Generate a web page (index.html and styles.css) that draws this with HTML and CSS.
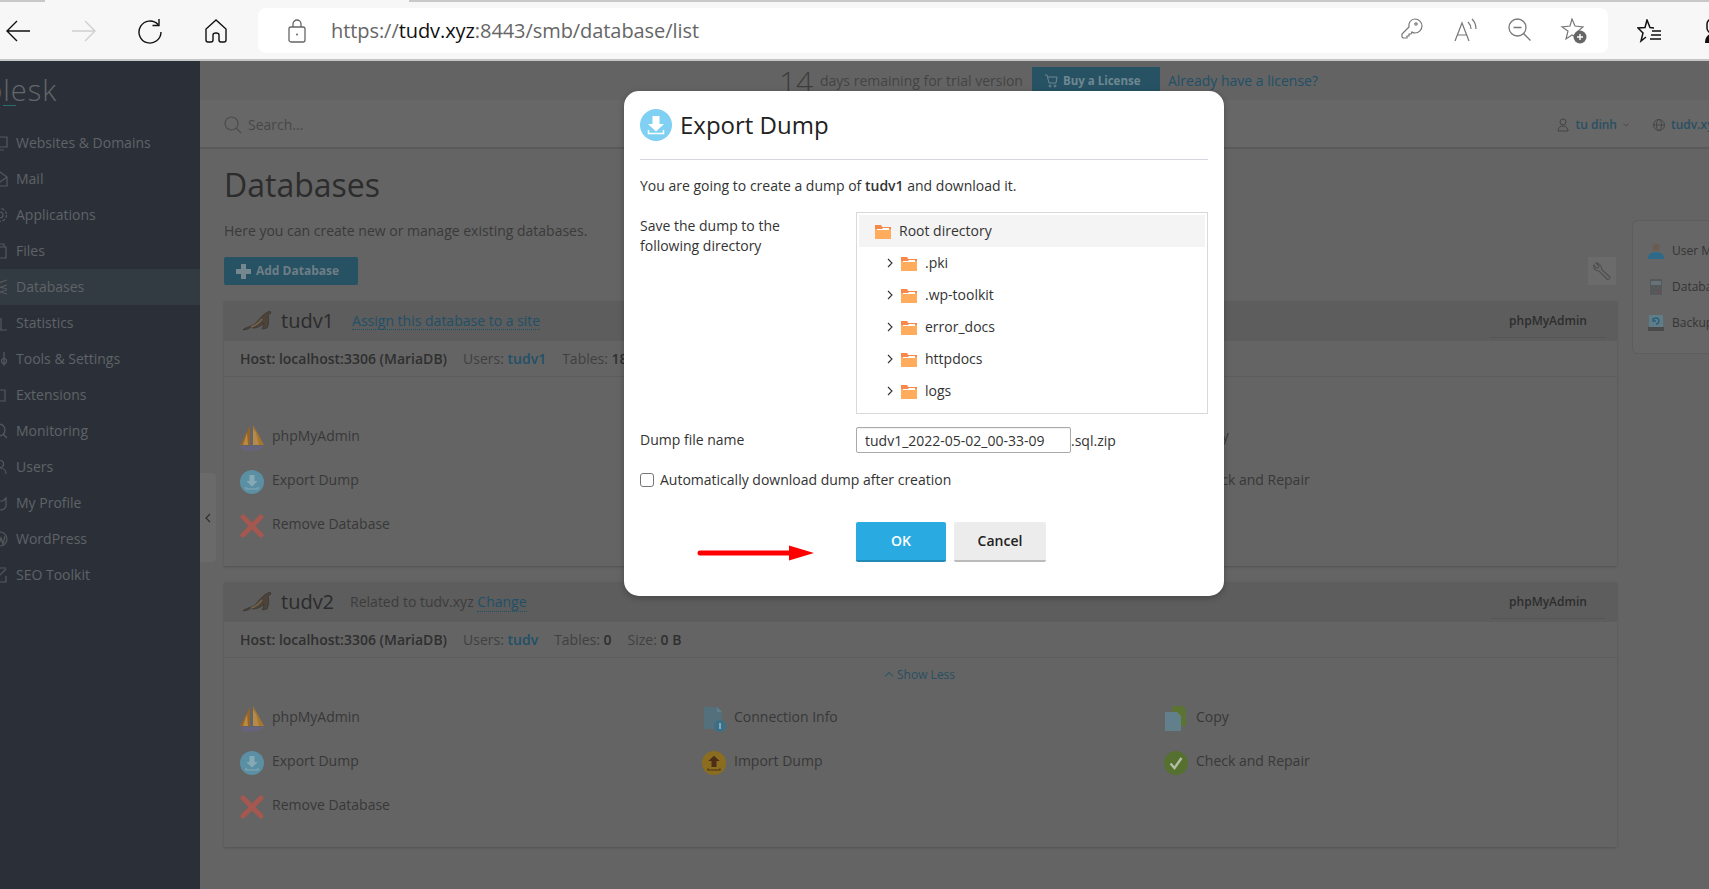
FILE: index.html
```html
<!DOCTYPE html>
<html lang="en">
  <head>
    <meta charset="UTF-8" />
    <title>Databases - Plesk</title>
    <link rel="stylesheet" href="styles.css">
  </head>
  <body>
    <svg class="sprite" xmlns="http://www.w3.org/2000/svg">
      <symbol id="i-sail" viewBox="0 0 24 26">
        <path d="M10 1 L10 20 L0 20 Z" fill="#96652b"/>
        <path d="M13 0 L13 20 L24 20 Z" fill="#a8762f"/>
        <path d="M16 8 L19 20 L13 20 L13 4 Z" fill="#c09a62" opacity=".55"/>
        <path d="M7 8 L8 20 L3 20 Z" fill="#b98a45"/>
        <path d="M0 21 L24 21 L20 25 L3 26 Z" fill="#67637a"/>
      </symbol>
      <symbol id="i-export" viewBox="0 0 24 24">
        <circle cx="12" cy="12" r="12" fill="#5b8fa3"/>
        <path d="M9.5 5h5v6h3.2L12 16.5 6.3 11h3.2z" fill="#86a9b6"/>
        <path d="M6 17v2h12v-2" fill="none" stroke="#86a9b6" stroke-width="1.2"/>
      </symbol>
      <symbol id="i-remove" viewBox="0 0 24 24">
        <path d="M3 3 L21 21 M21 3 L3 21" stroke="#a4584f" stroke-width="5" stroke-linecap="round"/>
      </symbol>
      <symbol id="i-info" viewBox="0 0 24 26">
        <path d="M2 1h13l5 5v17H2z" fill="#53707c"/>
        <path d="M15 1v5h5" fill="#5f7f8c"/>
        <circle cx="18" cy="20" r="6" fill="#3b6f88"/>
        <path d="M18 17v6" stroke="#9fb5be" stroke-width="1.6"/>
      </symbol>
      <symbol id="i-import" viewBox="0 0 24 24">
        <circle cx="12" cy="12" r="12" fill="#8a6d1f"/>
        <path d="M9.5 16h5v-6h3.2L12 4.8 6.3 10h3.2z" fill="#4d2c18"/>
        <path d="M6 17.5v1.5h12v-1.5" fill="none" stroke="#4d2c18" stroke-width="1.2"/>
      </symbol>
      <symbol id="i-copy" viewBox="0 0 24 26">
        <path d="M8 0h11l3 3v17H8z" fill="#5b7434"/>
        <path d="M1 6h12l4 4v15H1z" fill="#62808c"/>
      </symbol>
      <symbol id="i-check" viewBox="0 0 24 24">
        <circle cx="12" cy="12" r="12" fill="#56702f"/>
        <path d="M6.5 12.5l4 4.5 7-10" fill="none" stroke="#b4bda6" stroke-width="2.4"/>
      </symbol>
      <symbol id="i-seal" viewBox="0 0 30 20">
        <path d="M1 19c2-3 8-3 12-6 3-3 6-8 11-11l4-2 1 2-3 2c1 4 1 9-1 13l-5 1 1-2 1-4c-3 3-7 5-11 5l-2-1-3 2z" fill="#4e4338" stroke="#3a3734" stroke-width=".8"/>
        <path d="M9 16c4-1 8-4 11-8" fill="none" stroke="#73634f" stroke-width="1.6"/>
      </symbol>
      <symbol id="i-folder" viewBox="0 0 16 15">
        <path d="M0 1h6l1 2h9v12H0z" fill="#ffad5c"/>
        <path d="M0 1h6l1 2h9v2H0z" fill="#f5894a"/>
        <path d="M2 5h5l1-1h6v2H2z" fill="#fff"/>
      </symbol>
      <symbol id="i-chev" viewBox="0 0 8 12">
        <path d="M3 2 L7 6 L3 10" fill="none" stroke="#333" stroke-width="1.1"/>
      </symbol>
    </svg>

    <div class="tabstrip"></div>
    <div class="toolbar">
      <span class="slot slot-first">
        <svg width="26" height="24" viewBox="0 0 26 24" fill="none" stroke="#111" stroke-width="1.4"><path d="M25 12H2M12 2 2 12l10 10"/></svg>
      </span>
      <span class="slot">
        <svg width="26" height="24" viewBox="0 0 26 24" fill="none" stroke="#cfcfcf" stroke-width="1.4"><path d="M1 12h23M14 2l10 10-10 10"/></svg>
      </span>
      <span class="slot">
        <svg width="26" height="26" viewBox="0 0 26 26" fill="none" stroke="#111" stroke-width="1.4"><path d="M21 6.500A11 11 0 1 0 24 14M22 1v6.500h-6.500"/></svg>
      </span>
      <span class="slot">
        <svg width="24" height="24" viewBox="0 0 24 24" fill="none" stroke="#111" stroke-width="1.4"><path d="M12 1 2 10v11q0 2 2 2h3q2 0 2-2v-5q0-2 3-2t3 2v5q0 2 2 2h3q2 0 2-2V10z"/></svg>
      </span>
      <div class="addressbar">
        <svg class="lock" width="20" height="24" viewBox="0 0 20 24" fill="none" stroke="#666" stroke-width="1.3"><rect x="2" y="8" width="16" height="15" rx="2"/><path d="M6 8V5a4 4 0 0 1 8 0v3"/><circle cx="10" cy="15.5" r="1" fill="#666" stroke="none"/></svg>
        <span class="url">https://<b>tudv.xyz</b>:8443/smb/database/list</span>
        <span class="bar-icons">
          <span class="bar-slot">
            <svg width="22" height="22" viewBox="0 0 22 22" fill="none" stroke="#777" stroke-width="1.2"><path d="M14 1a7 7 0 0 1 0 14c-1 0-2 0-3-1l-1 2H8v2H6v2H2l-1-1v-3l7-7c-1-4 2-8 6-8z"/><circle cx="15" cy="6" r="1.2"/></svg>
          </span>
          <span class="bar-slot">
            <svg width="24" height="24" viewBox="0 0 24 24" fill="none" stroke="#777" stroke-width="1.2"><path d="M1 23 8 5l7 18M3.5 17h9M14 4q3 3 3 7M18 1q4 4 4 10"/></svg>
          </span>
          <span class="bar-slot">
            <svg width="24" height="24" viewBox="0 0 24 24" fill="none" stroke="#777" stroke-width="1.3"><circle cx="9.5" cy="9.5" r="8.5"/><path d="M5.5 9.5h8M15.5 15.5l7 7"/></svg>
          </span>
          <span class="bar-slot">
            <svg width="28" height="26" viewBox="0 0 28 26" fill="none" stroke="#777" stroke-width="1.2"><path d="M12 1l3 7 8 1-6 5 2 7-7-4-6 4 2-8-6-4 8-1z"/><circle cx="20" cy="19" r="6.5" fill="#666" stroke="none"/><path d="M17 19h6M20 16v6" stroke="#fff" stroke-width="1.4"/></svg>
          </span>
        </span>
      </div>
      <span class="slot slot-gap">
        <svg width="26" height="24" viewBox="0 0 26 24" fill="none" stroke="#111" stroke-width="1.5"><path d="M9 18l-5 4 2-8-5-5 7-.5L10 1l3 7.500 4 .5M15 12h9M14 16h10M13 20h11"/></svg>
      </span>
      <span class="slot">
        <svg width="26" height="26" viewBox="0 0 26 26"><rect x="4" y="1" width="12" height="14" rx="5" fill="none" stroke="#111" stroke-width="1.5"/><path d="M2 25c0-7 4-10 11-10s11 3 11 10z" fill="#111"/></svg>
      </span>
    </div>

    <div class="app">
      <aside class="sidebar">
        <div class="logo">plesk</div>
        <nav class="nav">
          <a class="nav-item"><svg viewBox="0 0 16 16"><path d="M1 2h14v10H1zM4 15h8"/></svg>Websites &amp; Domains</a>
          <a class="nav-item"><svg viewBox="0 0 16 16"><path d="M1 6l7-5 7 5v9H1zM1 6l7 5 7-5"/></svg>Mail</a>
          <a class="nav-item"><svg viewBox="0 0 16 16"><circle cx="8" cy="8" r="3"/><circle cx="8" cy="8" r="6.5" stroke-dasharray="3 1.5"/></svg>Applications</a>
          <a class="nav-item"><svg viewBox="0 0 16 16"><path d="M2 4h12v11H2zM4 1h8v3"/></svg>Files</a>
          <a class="nav-item active"><svg viewBox="0 0 16 16"><path d="M15 1 1 6l14 4M15 6 1 11l14 4M15 11 1 15"/></svg>Databases</a>
          <a class="nav-item"><svg viewBox="0 0 16 16"><path d="M4 15V9M9 15V3M15 15H1"/></svg>Statistics</a>
          <a class="nav-item"><svg viewBox="0 0 16 16"><path d="M4 1v14M12 1v14"/><circle cx="4" cy="5" r="2.5"/><circle cx="12" cy="10" r="2.5"/></svg>Tools &amp; Settings</a>
          <a class="nav-item"><svg viewBox="0 0 16 16"><path d="M3 3h10v11H3z"/></svg>Extensions</a>
          <a class="nav-item"><svg viewBox="0 0 16 16"><circle cx="7" cy="7" r="6"/><path d="M11 11l4 4"/></svg>Monitoring</a>
          <a class="nav-item"><svg viewBox="0 0 16 16"><circle cx="8" cy="5" r="3.5"/><path d="M2 15c0-4 3-6 6-6s6 2 6 6"/></svg>Users</a>
          <a class="nav-item"><svg viewBox="0 0 16 16"><path d="M2 3l3 3h6l3-3v8a6 4 0 0 1-12 0z"/></svg>My Profile</a>
          <a class="nav-item"><svg viewBox="0 0 16 16"><circle cx="8" cy="8" r="7"/><path d="M4 5l3 8 2-6 2 6 2-8"/></svg>WordPress</a>
          <a class="nav-item"><svg viewBox="0 0 16 16"><path d="M2 1h12M2 1v14h12V9M6 10l8-8"/></svg>SEO Toolkit</a>
        </nav>
      </aside>

      <main class="main">
        <div class="collapse-handle">
          <svg width="6" height="10" viewBox="0 0 6 10" fill="none" stroke="#2d2d2d" stroke-width="1.1"><path d="M5 1 1 5l4 4"/></svg>
        </div>

        <div class="trial-banner">
          <span class="trial-days">14</span>
          <span class="trial-text">days remaining for trial version</span>
          <a class="buy-btn">
            <svg width="14" height="14" viewBox="0 0 14 14" fill="none" stroke="#6f8791" stroke-width="1"><path d="M1 1h2l2 8h7l1-6H4"/><circle cx="6" cy="12" r="1"/><circle cx="11" cy="12" r="1"/></svg>
            Buy a License
          </a>
          <a class="trial-link">Already have a license?</a>
        </div>

        <div class="searchbar">
          <svg class="search-icon" width="18" height="18" viewBox="0 0 18 18" fill="none" stroke="#4a4a4a" stroke-width="1.1"><circle cx="7.5" cy="7.5" r="6.5"/><path d="M12 12l5 5"/></svg>
          <span class="search-hint">Search...</span>
          <span class="user-menu">
            <svg width="12" height="14" viewBox="0 0 12 14" fill="none" stroke="#444" stroke-width="1"><circle cx="6" cy="4" r="3"/><path d="M1 13c0-3 2-5 5-5s5 2 5 5z"/></svg>
            <a>tu dinh</a>
            <svg width="6" height="4" viewBox="0 0 6 4" fill="none" stroke="#444" stroke-width=".8"><path d="M.5 .5 3 3 5.500 .5"/></svg>
          </span>
          <span class="domain-menu">
            <svg width="12" height="14" viewBox="0 0 12 12" fill="none" stroke="#444" stroke-width=".9"><circle cx="6" cy="6" r="5.500"/><ellipse cx="6" cy="6" rx="2.500" ry="5.500"/><path d="M.5 6h11"/></svg>
            <a>tudv.xyz</a>
          </span>
        </div>

        <div class="content">
          <div class="content-main">
            <h1 class="page-title">Databases</h1>
            <p class="page-desc">Here you can create new or manage existing databases.</p>
            <div class="page-tools">
              <a class="add-btn">
                <svg width="15" height="15" viewBox="0 0 15 15"><path d="M5 0h5v5h5v5h-5v5H5v-5H0V5h5z" fill="#76888f"/></svg>
                Add Database
              </a>
              <a class="tool-btn">
                <svg width="18" height="18" viewBox="0 0 18 18" fill="none" stroke="#4e4e4e" stroke-width="1.1"><path d="M3 1l3 3-1 2-2 0-2-3c-1 3 1 6 5 6l8 8c1 1 3 0 3-2l-8-7c0-4-3-7-6-7z"/></svg>
              </a>
            </div>

            <section class="db-card">
              <div class="db-head">
                <svg class="seal"><use href="#i-seal"/></svg>
                <span class="db-name">tudv1</span>
                <a class="dotted">Assign this database to a site</a>
                <a class="db-tab">phpMyAdmin</a>
              </div>
              <div class="db-info">
                <span class="strong">Host: localhost:3306 (MariaDB)</span>
                <span>Users: <a class="link">tudv1</a></span>
                <span>Tables: <span class="strong">18</span></span>
              </div>
              <div class="show-less"><span class="caret"></span> Show Less</div>
              <div class="actions">
                <a class="action"><svg><use href="#i-sail"/></svg>phpMyAdmin</a>
                <a class="action"><svg><use href="#i-info"/></svg>Connection Info</a>
                <a class="action"><svg><use href="#i-copy"/></svg>Copy</a>
                <a class="action"><svg><use href="#i-export"/></svg>Export Dump</a>
                <a class="action"><svg><use href="#i-import"/></svg>Import Dump</a>
                <a class="action"><svg><use href="#i-check"/></svg>Check and Repair</a>
                <a class="action"><svg><use href="#i-remove"/></svg>Remove Database</a>
              </div>
            </section>

            <section class="db-card">
              <div class="db-head">
                <svg class="seal"><use href="#i-seal"/></svg>
                <span class="db-name">tudv2</span>
                <span class="related">Related to tudv.xyz <a class="dotted">Change</a></span>
                <a class="db-tab">phpMyAdmin</a>
              </div>
              <div class="db-info">
                <span class="strong">Host: localhost:3306 (MariaDB)</span>
                <span>Users: <a class="link">tudv</a></span>
                <span>Tables: <span class="strong">0</span></span>
                <span>Size: <span class="strong">0 B</span></span>
              </div>
              <div class="show-less"><span class="caret"></span> Show Less</div>
              <div class="actions">
                <a class="action"><svg><use href="#i-sail"/></svg>phpMyAdmin</a>
                <a class="action"><svg><use href="#i-info"/></svg>Connection Info</a>
                <a class="action"><svg><use href="#i-copy"/></svg>Copy</a>
                <a class="action"><svg><use href="#i-export"/></svg>Export Dump</a>
                <a class="action"><svg><use href="#i-import"/></svg>Import Dump</a>
                <a class="action"><svg><use href="#i-check"/></svg>Check and Repair</a>
                <a class="action"><svg><use href="#i-remove"/></svg>Remove Database</a>
              </div>
            </section>
          </div>

          <aside class="side-panel">
            <a class="side-item">
              <svg viewBox="0 0 16 16"><circle cx="8" cy="4.500" r="3.500" fill="#6b5c50"/><path d="M0 16c0-5 3-7 8-7s8 2 8 7z" fill="#2d6a8a"/></svg>
              User Management
            </a>
            <a class="side-item">
              <svg viewBox="0 0 16 16"><rect x="2" y="0" width="12" height="16" fill="#55595c"/><path d="M3 3h10M3 5h10" stroke="#7a8a94"/><rect x="10" y="12" width="2" height="1" fill="#a33"/></svg>
              Databases
            </a>
            <a class="side-item">
              <svg viewBox="0 0 16 16"><rect x="1" y="0" width="14" height="12" fill="#5f7d88"/><rect x="0" y="12" width="16" height="4" fill="#4a4a4a"/><path d="M5 6a3 3 0 1 1 3 3M5 3v3h3" fill="none" stroke="#2b5f7a" stroke-width="1.300"/></svg>
              Backup
            </a>
          </aside>
        </div>
      </main>
    </div>

    <div class="modal">
      <div class="modal-head">
        <svg class="modal-icon" viewBox="0 0 32 32">
          <circle cx="16" cy="16" r="16" fill="#7fd0f2"/>
          <path d="M12.500 7h7v8h4.500L16 22.500 8 15h4.500z" fill="#fff"/>
          <path d="M8.500 21v3.500h15V21" fill="none" stroke="#fff" stroke-width="1.500"/>
        </svg>
        <h2 class="modal-title">Export Dump</h2>
      </div>
      <p class="modal-intro">You are going to create a dump of <b>tudv1</b> and download it.</p>

      <div class="form-row">
        <label class="form-label tree-label">Save the dump to the following directory</label>
        <div class="tree">
          <div class="tree-row root"><svg class="folder"><use href="#i-folder"/></svg>Root directory</div>
          <div class="tree-row"><svg class="chev"><use href="#i-chev"/></svg><svg class="folder"><use href="#i-folder"/></svg>.pki</div>
          <div class="tree-row"><svg class="chev"><use href="#i-chev"/></svg><svg class="folder"><use href="#i-folder"/></svg>.wp-toolkit</div>
          <div class="tree-row"><svg class="chev"><use href="#i-chev"/></svg><svg class="folder"><use href="#i-folder"/></svg>error_docs</div>
          <div class="tree-row"><svg class="chev"><use href="#i-chev"/></svg><svg class="folder"><use href="#i-folder"/></svg>httpdocs</div>
          <div class="tree-row"><svg class="chev"><use href="#i-chev"/></svg><svg class="folder"><use href="#i-folder"/></svg>logs</div>
        </div>
      </div>

      <div class="form-row file-row">
        <label class="form-label">Dump file name</label>
        <input class="file-input" type="text" value="tudv1_2022-05-02_00-33-09" />
        <span class="file-ext">.sql.zip</span>
      </div>

      <label class="check-row"><input class="check" type="checkbox" />Automatically download dump after creation</label>

      <div class="modal-buttons">
        <button class="btn btn-ok">OK</button>
        <button class="btn btn-cancel">Cancel</button>
      </div>

      <svg class="red-arrow" width="118" height="18" viewBox="0 0 118 18">
        <path d="M3 9h92" stroke="#ff0000" stroke-width="5" stroke-linecap="round"/>
        <path d="M92 1.500 117 9 92 16.500z" fill="#ff0000"/>
      </svg>
    </div>
  </body>
</html>
```

FILE: styles.css
```css
* {
  box-sizing: border-box;
}

html, body {
  height: 100%;
}

body {
  margin: 0;
  overflow: hidden;
  display: flex;
  flex-direction: column;
  font-family: "Open Sans", Arial, sans-serif;
  font-size: 14px;
  line-height: 20px;
  color: #333;
  background: #646464;
}

.sprite {
  position: absolute;
  width: 0;
  height: 0;
}

/* browser chrome */
.tabstrip {
  height: 2px;
  flex: none;
  background: linear-gradient(to right, #c8c8c8 45px, #f7f7f7 45px, #f7f7f7 409px, #c8c8c8 409px);
}

.toolbar {
  height: 59px;
  flex: none;
  display: flex;
  align-items: flex-start;
  padding-top: 6px;
  background: #f7f7f7;
  border-bottom: 2px solid #c6c6c6;
  overflow: hidden;
}

.slot {
  flex: none;
  width: 66px;
  height: 45px;
  display: flex;
  align-items: center;
  justify-content: center;
}

.slot-first {
  margin-left: -15px;
}

.slot-gap {
  margin-left: 9px;
}

.addressbar {
  flex: none;
  width: 1350px;
  height: 45px;
  margin-left: 9px;
  display: flex;
  align-items: center;
  background: #fff;
  border-radius: 8px;
}

.lock {
  margin-left: 29px;
}

.url {
  margin-left: 24px;
  font-size: 20px;
  letter-spacing: -0.07px;
  color: #666;
}

.url b {
  font-weight: 400;
  color: #111;
}

.bar-icons {
  margin-left: auto;
  padding-right: 7px;
  display: flex;
}

.bar-slot {
  width: 54px;
  display: flex;
  justify-content: center;
}

/* plesk shell */
.app {
  flex: 1;
  min-height: 0;
  display: flex;
}

.sidebar {
  flex: none;
  width: 200px;
  background: #2b3038;
  color: #5f6367;
}

.logo {
  position: relative;
  height: 64px;
  margin-left: -15px;
  padding-top: 9px;
  font-size: 29px;
  font-weight: 300;
  line-height: 40px;
  letter-spacing: 1px;
  color: #63676b;
}

.logo::after {
  content: "";
  position: absolute;
  left: 18px;
  top: 44px;
  width: 13px;
  height: 1px;
  background: #2c6b70;
}

.nav-item {
  height: 36px;
  display: flex;
  align-items: center;
  gap: 8px;
  font-weight: 500;
}

.nav-item svg {
  width: 16px;
  height: 16px;
  margin-left: -8px;
  fill: none;
  stroke: #55595e;
  stroke-width: 1.2;
}

.nav-item.active {
  background: #333b42;
}

.main {
  position: relative;
  flex: 1;
  min-width: 0;
  overflow: hidden;
  background: #646464;
}

.collapse-handle {
  position: absolute;
  left: 0;
  top: 412px;
  width: 16px;
  height: 89px;
  display: flex;
  align-items: center;
  justify-content: center;
  background: #6a6a6a;
  border-radius: 0 4px 4px 0;
}

.trial-banner {
  height: 39px;
  padding-left: 579px;
  display: flex;
  align-items: flex-end;
  background: #636363;
}

.trial-days {
  width: 41px;
  font-size: 30px;
  font-weight: 300;
  line-height: 36px;
  color: #3d3d3d;
}

.trial-text {
  height: 33px;
  line-height: 28px;
  color: #434343;
}

.buy-btn {
  height: 33px;
  margin-left: 9px;
  width: 128px;
  padding: 0 0 5px 12px;
  display: flex;
  align-items: center;
  gap: 5px;
  font-size: 11.5px;
  font-weight: 700;
  color: #6f8791;
  background: #265264;
}

.trial-link {
  height: 33px;
  margin-left: 8px;
  line-height: 28px;
  color: #1f5068;
}

.searchbar {
  height: 49px;
  padding: 2px 0 0 24px;
  display: flex;
  align-items: center;
  background: #676767;
  border-bottom: 2px solid #5a5a5a;
  font-size: 12px;
}

.search-icon {
  flex: none;
}

.search-hint {
  margin-left: 6px;
  font-size: 14px;
  color: #474747;
}

.user-menu {
  margin-left: auto;
  display: flex;
  align-items: center;
  gap: 6px;
  font-weight: 600;
  color: #294f61;
}

.domain-menu {
  flex: none;
  width: 56px;
  margin-left: 24px;
  display: flex;
  align-items: center;
  gap: 6px;
  white-space: nowrap;
  font-weight: 600;
  color: #294f61;
}

.domain-menu svg {
  flex: none;
}

.content {
  display: flex;
  align-items: flex-start;
  padding-left: 24px;
}

.content-main {
  flex: none;
  width: 1393px;
}

.page-title {
  margin: 14px 0 14px;
  font-size: 32px;
  font-weight: 400;
  line-height: 44px;
  color: #2c2c2c;
}

.page-desc {
  margin: 0 0 16px;
  color: #3a3a3a;
}

.page-tools {
  display: flex;
  justify-content: space-between;
  margin-bottom: 16px;
}

.add-btn {
  width: 134px;
  height: 28px;
  padding-left: 12px;
  display: flex;
  align-items: center;
  gap: 5px;
  font-size: 12px;
  font-weight: 700;
  color: #6f7e84;
  background: #265264;
  border-radius: 2px;
}

.tool-btn {
  width: 28px;
  height: 28px;
  margin-right: 1px;
  display: flex;
  align-items: center;
  justify-content: center;
  background: #6b6b6b;
}

.db-card {
  margin-bottom: 16px;
  box-shadow: 0 1px 2px rgba(0, 0, 0, 0.18);
}

.db-head {
  height: 40px;
  padding: 0 11px 0 18px;
  display: flex;
  align-items: center;
  background: #5d5d5d;
}

.seal {
  width: 30px;
  height: 20px;
  flex: none;
}

.db-name {
  margin-left: 9px;
  font-size: 20px;
  line-height: 28px;
  color: #2b2b2b;
}

.dotted {
  color: #1f5068;
  border-bottom: 1px dotted #1f5068;
  line-height: 17px;
}

.db-head > .dotted {
  margin-left: 18px;
}

.related {
  margin-left: 16px;
  color: #3c3c3c;
}

.db-tab {
  margin-left: auto;
  width: 116px;
  height: 34px;
  line-height: 34px;
  text-align: center;
  font-size: 12px;
  font-weight: 600;
  color: #2d2d2d;
  border-bottom: 1px solid #555;
}

.db-info {
  height: 36px;
  padding-left: 16px;
  display: flex;
  align-items: center;
  gap: 16px;
  color: #404040;
  border-bottom: 1px solid #5c5c5c;
}

.strong {
  font-weight: 600;
  color: #2f2f2f;
}

.link {
  color: #1f5068;
  font-weight: 600;
}

.show-less {
  height: 37px;
  padding-top: 7px;
  text-align: center;
  font-size: 12px;
  color: #2a4f60;
}

.caret {
  display: inline-block;
  width: 6px;
  height: 6px;
  margin: 0 2px 0 0;
  border-left: 1px solid #2f5566;
  border-top: 1px solid #2f5566;
  transform: rotate(45deg);
}

.actions {
  display: grid;
  grid-template-columns: repeat(3, 462px);
  padding: 0 0 20px 16px;
}

.action {
  height: 44px;
  display: flex;
  align-items: center;
  gap: 8px;
  color: #383838;
}

.action svg {
  width: 24px;
  height: 26px;
  flex: none;
  margin-top: 3px;
}

.side-panel {
  flex: none;
  width: 200px;
  margin: 71px 0 0 15px;
  padding: 12px 15px;
  background: #666;
  border: 1px solid #5d5d5d;
  border-radius: 6px;
  font-size: 12px;
  color: #343434;
}

.side-item {
  height: 36px;
  display: flex;
  align-items: center;
  gap: 8px;
}

.side-item svg {
  width: 16px;
  height: 16px;
}

/* dialog */
.modal {
  position: absolute;
  left: 624px;
  top: 91px;
  width: 600px;
  height: 505px;
  padding: 0 16px;
  background: #fff;
  border-radius: 15px;
  box-shadow: 0 2px 6px rgba(0, 0, 0, 0.25);
}

.modal-head {
  height: 69px;
  padding-top: 18px;
  display: flex;
  align-items: flex-start;
  gap: 8px;
  border-bottom: 1px solid #d8d6e2;
}

.modal-icon {
  width: 32px;
  height: 32px;
}

.modal-title {
  margin: 0;
  font-size: 24px;
  font-weight: 400;
  line-height: 32px;
  color: #222;
}

.modal-intro {
  margin: 16px 0;
}

.modal-intro b {
  font-weight: 600;
}

.form-row {
  display: flex;
  align-items: flex-start;
}

.form-label {
  flex: none;
  width: 216px;
}

.tree-label {
  padding: 4px 50px 0 0;
}

.tree {
  flex: 1;
  padding: 2px 2px 6px;
  border: 1px solid #d9d9d9;
}

.tree-row {
  height: 32px;
  padding-left: 26px;
  display: flex;
  align-items: center;
  color: #333;
}

.tree-row.root {
  padding-left: 16px;
  background: #f4f4f4;
}

.folder {
  flex: none;
  width: 16px;
  height: 15px;
  margin-right: 8px;
}

.chev {
  flex: none;
  width: 8px;
  height: 12px;
  margin-right: 8px;
}

.file-row {
  margin-top: 13px;
  align-items: center;
}

.file-input {
  width: 215px;
  height: 26px;
  padding: 0 8px;
  font: inherit;
  color: #333;
  border: 1px solid #aaa;
  border-radius: 2px;
  box-shadow: inset 0 1px 1px rgba(0, 0, 0, 0.06);
}

.file-ext {
  padding-top: 2px;
}

.check-row {
  height: 20px;
  margin-top: 17px;
  display: flex;
  align-items: center;
  gap: 6px;
}

.check {
  appearance: none;
  width: 14px;
  height: 14px;
  margin: 0;
  background: #fff;
  border: 1px solid #767676;
  border-radius: 3px;
}

.modal-buttons {
  margin: 32px 0 0 216px;
  display: flex;
  gap: 8px;
}

.btn {
  height: 40px;
  padding: 0;
  font: inherit;
  font-weight: 600;
  border: none;
  border-radius: 2px;
}

.btn-ok {
  width: 90px;
  color: #fff;
  background: #29abe2;
  border-bottom: 2px solid #2288b5;
}

.btn-cancel {
  width: 92px;
  color: #222;
  background: #ececec;
  border-bottom: 2px solid #bbb;
}

.red-arrow {
  position: absolute;
  left: 73px;
  top: 453px;
}
```
